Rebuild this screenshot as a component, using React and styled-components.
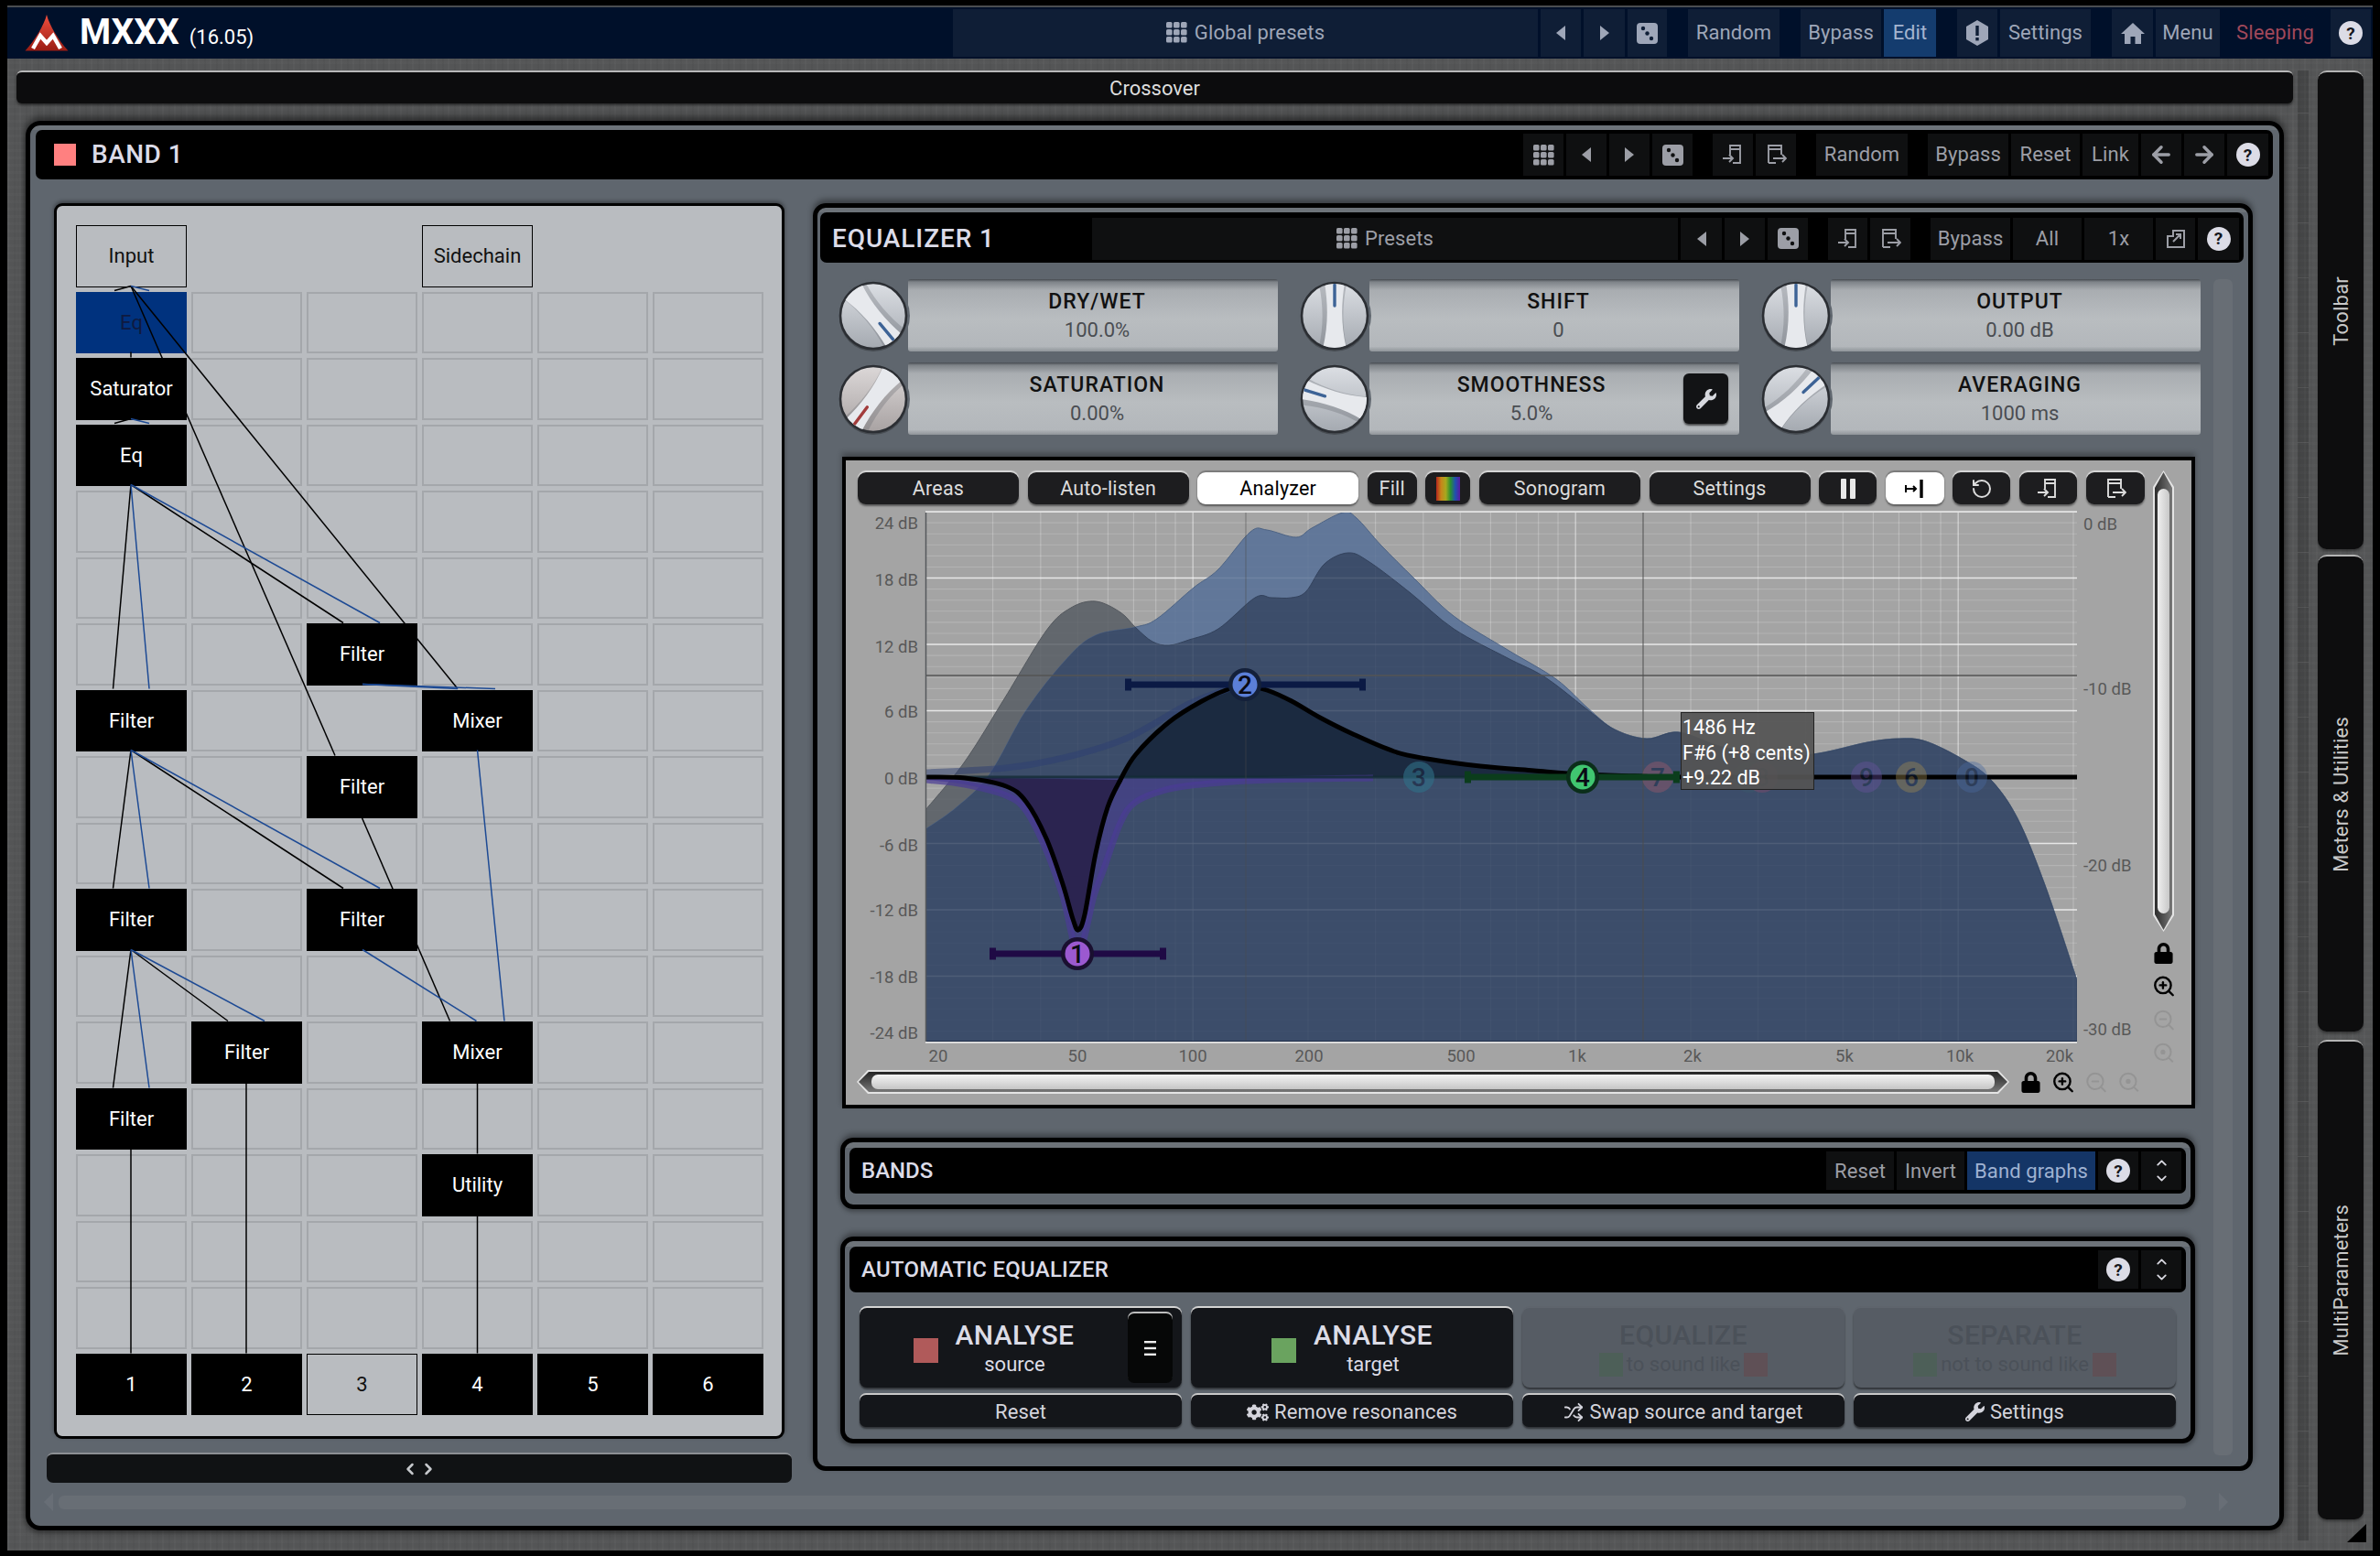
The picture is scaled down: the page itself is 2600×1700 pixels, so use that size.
import React from 'react';
import styled, { createGlobalStyle } from 'styled-components';
import { ArrowLeft, ArrowRight, ChevronUp, ChevronDown, ChevronLeft, ChevronRight, RotateCcw, ZoomIn, ZoomOut, Shuffle } from 'lucide-react';
import { FaWrench, FaCogs, FaLock } from 'react-icons/fa';

const Global = createGlobalStyle`
  html, body { margin: 0; padding: 0; background: #000; }
  #root { width: 2600px; height: 1700px; overflow: hidden; }
  * { box-sizing: border-box; }
`;

const panelBg = '#5f666e';

const Page = styled.div`
  width: 2600px; height: 1700px; background: #000;
  padding: 6px 8px 6px 8px; display: flex; flex-direction: column;
  font-family: Roboto, "Liberation Sans", sans-serif; color: #ddd; font-size: 22px;
`;
const TopBar = styled.header`
  height: 58px; flex: none; background: #00102a; border-top: 2px solid #4a4c50;
  display: flex; align-items: center; justify-content: space-between; padding: 0 2px 0 19px;
`;
const Brand = styled.div`display: flex; align-items: center; gap: 12px; color: #fff;`;
const BrandName = styled.span`font-size: 39px; font-weight: 700; letter-spacing: 0; padding-bottom: 3px;`;
const BrandVersion = styled.span`font-size: 22px; position: relative; top: 4px; margin-left: -1px;`;
const Cluster = styled.div`display: flex; gap: ${p => p.$gap || 23}px; align-items: center;`;
const Group = styled.div`display: flex; gap: 3px;`;
const Cell = styled.div`
  width: ${p => p.$w}px; height: ${p => p.$h || 46}px; display: flex; align-items: center; justify-content: center; gap: 8px;
  background: ${p => p.$active ? p.$activeBg || '#143c6e' : p.$plain ? 'transparent' : p.$navy ? '#0f1e36' : '#0f1011'};
  color: ${p => p.$color || (p.$navy ? '#9ea6b8' : '#9c9ea6')}; font-size: 22px; white-space: nowrap; letter-spacing: .1px;
  padding-bottom: ${p => p.$lift || 0}px;
`;
const Surface = styled.div`
  flex: 1; position: relative; display: flex; padding: 13px 0 0 10px; gap: 0;
  background:
    repeating-linear-gradient(90deg, rgba(255,255,255,.025) 0 2px, transparent 2px 7px, rgba(0,0,0,.03) 7px 9px, transparent 9px 13px),
    repeating-linear-gradient(0deg, rgba(255,255,255,.015) 0 3px, transparent 3px 8px),
    #545556;
`;
const MainCol = styled.main`width: 2487px; flex: none; display: flex; flex-direction: column;`;
const CrossoverBar = styled.div`
  height: 36px; flex: none; background: #0c0c0d; border-top: 2px solid #b8b8b8; border-radius: 6px;
  display: flex; align-items: center; justify-content: center; color: #ddd;
  box-shadow: 0 2px 3px rgba(0,0,0,.5);
`;
const BandPanel = styled.section`
  margin: 19px 0 0 10px; width: 2467px; height: 1540px; flex: none; border: 5px solid #000; border-radius: 16px;
  background: linear-gradient(#6d7379 0 5px, ${panelBg} 5px); padding-top: 5px;
  box-shadow: 0 -5px 8px rgba(0,0,0,.45), 0 3px 6px rgba(0,0,0,.4);
`;
const PanelHeader = styled.div`
  height: ${p => p.$h}px; margin: ${p => p.$m}; background: #000; border-radius: 7px;
  display: flex; align-items: center; justify-content: space-between; padding: ${p => p.$pt || 0}px 5px 0 ${p => p.$pl}px;
`;
const TitleWrap = styled.div`display: flex; align-items: center; gap: 17px;`;
const Swatch = styled.div`width: ${p => p.$s || 24}px; height: ${p => p.$s || 24}px; background: ${p => p.$c}; flex: none;`;
const PanelTitle = styled.span`
  font-size: ${p => p.$s || 28}px; font-weight: 500; color: #dcdce8; letter-spacing: ${p => p.$ls || 0}px;
  padding-bottom: ${p => p.$pb || 0}px;
`;
const BodyRow = styled.div`display: flex; align-items: flex-start; gap: 23px; padding-left: 18px; margin-top: 26px; height: 1398px;`;
const LeftCol = styled.div`width: 814px; flex: none; display: flex; flex-direction: column;`;
const GraphFrame = styled.div`
  margin: 0 8px; height: 1350px; border: 3px solid #000; border-radius: 9px; background: #b9bcc0;
  padding: 21px 0 0 21px; box-shadow: 0 -2px 4px rgba(0,0,0,.4);
`;
const NodeGrid = styled.div`
  position: relative; width: 751px; height: 1300px; display: grid;
  grid-template-columns: repeat(6, 121px); grid-template-rows: repeat(18, 67.5px); gap: 5px;
`;
const kinds = {
  none: 'background: transparent;',
  empty: 'border: 2px solid #a4a7ab;',
  black: 'background:#000; color:#fff;',
  blue: 'background:#00327e; color:#0f1a40;',
  outline: 'border: 1.5px solid #000; color:#111;',
};
const Node = styled.div`
  display: flex; align-items: center; justify-content: center; font-size: 22px;
  ${p => kinds[p.$kind]}
`;
const Wires = styled.svg`position: absolute; inset: 0; pointer-events: none;`;
const Splitter = styled.div`
  margin-top: 15px; height: 33px; flex: none; background: #101214; border-top: 2px solid #8d9094; border-radius: 7px;
  display: flex; align-items: center; justify-content: center; color: #c6c8cc; gap: 0;
`;
const BandScroll = styled.div`
  margin: 11px 56px 0 15px; height: 20px; display: flex; align-items: center; gap: 6px;
`;
const FaintArrow = styled.div`
  width: 0; height: 0; flex: none; border-top: 10px solid transparent; border-bottom: 10px solid transparent;
  ${p => p.$dir === 'l' ? 'border-right: 10px solid #686e76;' : 'border-left: 10px solid #686e76; margin-left: 30px;'}
`;
const FaintTrack = styled.div`flex: 1; height: 15px; background: #686e75; border-radius: 6px;`;

const EqPanel = styled.section`
  width: 1573px; height: 1385px; flex: none; border: 5px solid #000; border-radius: 14px;
  background: linear-gradient(#6d7379 0 5px, ${panelBg} 5px); padding-top: 5px;
  box-shadow: 0 -4px 6px rgba(0,0,0,.4);
`;
const EqBody = styled.div`display: flex; padding: 18px 17px 0 25px;`;
const EqCol = styled.div`width: 1488px; flex: none; display: flex; flex-direction: column;`;
const FaintV = styled.div`width: 21px; height: 1285px; margin-left: 12px; background: #686e75; border-radius: 6px; flex: none;`;
const KnobGrid = styled.div`display: grid; grid-template-columns: repeat(3, 478px); grid-template-rows: repeat(2, 79px); gap: 12px 26px;`;
const KnobUnit = styled.div`display: flex; align-items: center;`;
const KnobSvg = styled.svg`width: 80px; height: 80px; margin: 0 -2px 0 -4px; flex: none; position: relative; z-index: 1;`;
const Field = styled.div`
  flex: 1; height: 79px; display: flex; align-items: center; border-radius: 3px;
  background: linear-gradient(#454a50 0, #7e8388 3px, #a9adb1 12px, #b9bdc0 55%, #b3b7bb 93%, #8f9499 100%);
`;
const FieldText = styled.div`flex: 1; display: flex; flex-direction: column; align-items: center; line-height: 31px; padding-left: ${p => p.$pl || 9}px;`;
const FieldName = styled.span`font-size: 23px; font-weight: 500; color: #111; letter-spacing: 1px;`;
const FieldValue = styled.span`font-size: 22px; color: #4a4d52;`;
const WrenchBtn = styled.div`
  width: 49px; height: 55px; margin-right: 12px; background: #121315; border-radius: 6px; color: #d6d8de; flex: none;
  display: flex; align-items: center; justify-content: center; box-shadow: 0 2px 2px rgba(0,0,0,.6);
`;

const GraphPanel = styled.div`
  margin: 24px 0 0 2px; width: 1478px; height: 712px; flex: none; border: 4px solid #000; background: #a4a4a4;
  display: grid; grid-template-columns: 1420px 23px; column-gap: 8px; box-shadow: 0 -4px 6px rgba(0,0,0,.3);
`;
const GraphMain = styled.div`display: flex; flex-direction: column; padding-top: 13px;`;
const GraphTools = styled.div`display: flex; gap: 9.6px; padding-left: 13px; height: 35px; flex: none;`;
const GBtn = styled.div`
  width: ${p => p.$w}px; height: 35px; border-radius: 9px; display: flex; align-items: center; justify-content: center;
  background: ${p => p.$on ? '#fff' : '#1d1d1f'}; color: ${p => p.$on ? '#000' : '#dcdcdc'}; font-size: 21.5px; letter-spacing: .2px;
  box-shadow: 0 -2px 1px ${p => p.$on ? '#7a7a7a' : '#d8d8d8'}, 0 2px 2px #5c5c5c;
`;
const Rainbow = styled.div`width: 26px; height: 26px; background: linear-gradient(90deg, #b4261e, #c8841a, #a8a81e, #2a9030, #2050b0, #5a1aa0);`;
const ChartWrap = styled.div`position: relative; margin-top: 4px; height: 610px; flex: none;`;
const Chart = styled.svg`
  display: block; width: 1420px; height: 610px;
  text { font-family: Roboto, "Liberation Sans", sans-serif; }
`;
const ChartTip = styled.div`
  position: absolute; left: 912px; top: 223px; width: 146px; height: 85px; background: rgba(84,84,84,.93);
  border: 1px solid #222; color: #fff; font-size: 21.5px; line-height: 27.5px; padding: 2px 0 0 1px; white-space: nowrap;
`;
const HRow = styled.div`display: flex; align-items: center; margin: 4px 0 0 12px; height: 26px; gap: 10px;`;
const ScrollOuter = styled.div`
  background: #e4e4e4; padding: 2px; display: flex; flex: none;
  ${p => p.$h
    ? 'width: 1259px; height: 26px; clip-path: polygon(0 50%, 12px 0, calc(100% - 12px) 0, 100% 50%, calc(100% - 12px) 100%, 12px 100%);'
    : 'width: 23px; height: 504px; margin-top: 11px; clip-path: polygon(50% 0, 100% 18px, 100% calc(100% - 18px), 50% 100%, 0 calc(100% - 18px), 0 18px);'}
`;
const ScrollInner = styled.div`
  flex: 1; display: flex;
  ${p => p.$h
    ? 'padding: 3px 14px; background: linear-gradient(#242424, #787878); clip-path: polygon(0 50%, 11px 0, calc(100% - 11px) 0, 100% 50%, calc(100% - 11px) 100%, 11px 100%);'
    : 'padding: 18px 3px; background: linear-gradient(90deg, #2c2c2c, #787878); clip-path: polygon(50% 0, 100% 17px, 100% calc(100% - 17px), 50% 100%, 0 calc(100% - 17px), 0 17px);'}
`;
const Thumb = styled.div`
  flex: 1; border-radius: 7px;
  background: ${p => p.$h ? 'linear-gradient(#f4f4f4, #c6c6c6)' : 'linear-gradient(90deg, #efefef, #c8c8c8)'};
`;
const ToolIcon = styled.div`width: 26px; height: 26px; flex: none; display: flex; align-items: center; justify-content: center; color: ${p => p.$faint ? '#949494' : '#000'};`;
const GraphSide = styled.div`display: flex; flex-direction: column; align-items: center;`;
const SideIcons = styled.div`display: flex; flex-direction: column; gap: 10.5px; margin-top: 10px;`;

const Section = styled.section`
  margin-top: ${p => p.$mt}px; width: 1480px; height: ${p => p.$h}px; flex: none; border: 5px solid #000; border-radius: 14px;
  background: linear-gradient(#6d7379 0 6px, ${panelBg} 6px); padding: 6px 5px 0 5px;
  box-shadow: 0 -4px 6px rgba(0,0,0,.35), 0 3px 5px rgba(0,0,0,.3);
`;
const AutoGrid = styled.div`
  display: grid; grid-template-columns: repeat(4, 352px); grid-template-rows: 87px 35px; gap: 8px 10px; padding: 17px 0 0 11px;
`;
const BigBtn = styled.div`
  position: relative; display: flex; align-items: center; border-radius: 8px; background: ${p => p.$off ? '#565c64' : '#14161a'};
  box-shadow: 0 -2px 0 ${p => p.$off ? '#5e646c' : '#d4d4d4'}, 0 2px 2px rgba(0,0,0,.5);
`;
const BigMain = styled.div`flex: 1; display: flex; align-items: center; justify-content: center; gap: 19px; padding-top: 5px;`;
const BigLabels = styled.div`display: flex; flex-direction: column; align-items: center; line-height: 32px; color: ${p => p.$off ? '#4b5159' : '#dcdce6'};`;
const BigName = styled.span`font-size: 30px; font-weight: 500; letter-spacing: .4px;`;
const BigSub = styled.span`font-size: 22px; display: flex; align-items: center; gap: 4px;`;
const MenuBtn = styled.div`
  width: 49px; height: 76px; margin-right: 10px; background: #060707; border-radius: 7px; flex: none; color: #e6e6e6;
  box-shadow: 0 -2px 0 #bdbdbd; display: flex; align-items: center; justify-content: center;
`;
const SmallBtn = styled.div`
  display: flex; align-items: center; justify-content: center; gap: 6px; border-radius: 7px; background: #14161a; color: #d4d4dc;
  box-shadow: 0 -2px 0 #c8c8c8, 0 2px 2px rgba(0,0,0,.5); padding-top: 2px; letter-spacing: .1px;
`;
const SideBar = styled.aside`
  margin-left: 5px; width: 12px; height: 1607px; flex: none; background: rgba(0,0,0,.18);
  background-image: repeating-linear-gradient(0deg, rgba(255,255,255,.08) 0 1px, transparent 1px 60px);
`;
const SideCol = styled.div`margin-left: 10px; width: 50px; flex: none; display: flex; flex-direction: column;`;
const SidePanel = styled.div`
  height: ${p => p.$h}px; margin-bottom: ${p => p.$mb}px; background: #0d0d0e; border-top: 2px solid #b4b4b4; border-radius: 10px; flex: none;
  display: flex; align-items: center; justify-content: center; box-shadow: 0 2px 3px rgba(0,0,0,.4);
`;
const SideLabel = styled.span`writing-mode: vertical-rl; transform: rotate(180deg); color: #c8c8c8; font-size: 22px; letter-spacing: .2px;`;
const ResizeCorner = styled.div`
  position: absolute; right: 7px; bottom: 9px; width: 21px; height: 20px; background: #000;
  clip-path: polygon(100% 0, 100% 100%, 0 100%);
`;
const HelpDot = styled.span`
  width: 26px; height: 26px; border-radius: 50%; background: #dcdce6; color: #14161c; font-size: 19px; font-weight: 700;
  display: flex; align-items: center; justify-content: center;
`;
const Stack = styled.div`display: flex; flex-direction: column; align-items: center; line-height: 0;`;

const GridIcon = ({ c = 'currentColor' }) => (
  <svg width="23" height="23" viewBox="0 0 23 23">
    {[0, 8, 16].flatMap(y => [0, 8, 16].map(x => <rect key={`${x}${y}`} x={x} y={y} width="6.6" height="6.6" rx="1.6" fill={c} />))}
  </svg>
);
const Tri = ({ dir }) => (
  <svg width="12" height="18" viewBox="0 0 12 18"><path d={dir === 'l' ? 'M11 1 V17 L1 9Z' : 'M1 1 V17 L11 9Z'} fill="currentColor" /></svg>
);
const Dice = ({ hole }) => (
  <svg width="23" height="23" viewBox="0 0 23 23">
    <rect width="23" height="23" rx="4" fill="currentColor" />
    <circle cx="7" cy="6" r="2.2" fill={hole} /><circle cx="11.5" cy="11.5" r="2.2" fill={hole} /><circle cx="16" cy="17" r="2.2" fill={hole} />
  </svg>
);
const SaveIn = ({ s = 24 }) => (
  <svg width={s} height={s} viewBox="0 0 24 24" fill="none" stroke="currentColor" strokeWidth="1.9">
    <path d="M9 12V2H20V21H12M9 6H20M1 16H12M8 12l4 4-4 4" />
  </svg>
);
const SaveOut = ({ s = 24 }) => (
  <svg width={s} height={s} viewBox="0 0 24 24" fill="none" stroke="currentColor" strokeWidth="1.9">
    <path d="M4 21V2H18V12M4 6H18M4 21H12M9 16H23M19 12l4 4-4 4" />
  </svg>
);
const Warn = () => (
  <svg width="24" height="28" viewBox="0 0 24 28">
    <path d="M12 0L24 7V21L12 28L0 21V7Z" fill="currentColor" />
    <rect x="10.3" y="6" width="3.4" height="11" fill="#0f1e36" /><rect x="10.3" y="19" width="3.4" height="3.4" fill="#0f1e36" />
  </svg>
);
const Home = () => (
  <svg width="26" height="26" viewBox="0 0 26 26">
    <path d="M13 2L26 14H22V25H15.5V17H10.5V25H4V14H0Z" fill="currentColor" />
  </svg>
);
const FitZoom = () => (
  <svg width="27" height="27" viewBox="0 0 24 24" fill="none" stroke="currentColor" strokeWidth="1.8">
    <circle cx="11" cy="11" r="8" /><circle cx="11" cy="11" r="2.4" fill="currentColor" stroke="none" /><path d="M21 21l-4.3-4.3" />
  </svg>
);
const Logo = () => (
  <svg width="48" height="40" viewBox="0 0 48 40" style={{ flex: 'none' }}>
    <defs><linearGradient id="lg" x1="0" y1="0" x2="0" y2="1"><stop offset="0" stopColor="#f0503f" /><stop offset="1" stopColor="#9a1c13" /></linearGradient></defs>
    <path d="M24 0C27 12 37 28 47.5 39.5H.5C11 28 21 12 24 0Z" fill="url(#lg)" />
    <path d="M9 37L17 23L24 31L31 23L39 37" fill="none" stroke="#fff" strokeWidth="4.4" />
  </svg>
);
const Help = () => <HelpDot>?</HelpDot>;
const UpDown = () => <Stack><ChevronUp size={17} strokeWidth={2.6} /><ChevronDown size={17} strokeWidth={2.6} /></Stack>;

const Knob = ({ angle, color = '#3d6396', warm }) => (
  <KnobSvg viewBox="-40 -40 80 80">
    <defs>
      <linearGradient id={warm ? 'kw' : 'kb'} x1="0" y1="0" x2="0" y2="1">
        <stop offset="0" stopColor={warm ? '#dcd8d8' : '#dcdfe4'} /><stop offset="1" stopColor={warm ? '#a8a2a2' : '#a4a9b0'} />
      </linearGradient>
      <clipPath id="kc"><circle r="35" /></clipPath>
    </defs>
    <circle r="40" fill={panelBg} />
    <circle r="37" cy="2" fill="rgba(0,0,0,.25)" />
    <circle r="36" fill={`url(#${warm ? 'kw' : 'kb'})`} stroke="#2b2e33" strokeWidth="2.6" />
    <g clipPath="url(#kc)" transform={`rotate(${angle})`}>
      <path d="M-15-36C-10-12-10 12-16 36H16C10 12 10-12 15-36Z" fill="rgba(90,95,102,.28)" transform="translate(-2 2)" />
      <path d="M-11-36C-7-12-7 12-13 36H13C7 12 7-12 11-36Z" fill="#e7e9ed" />
      <line x1="0" y1="-34" x2="0" y2="-11" stroke={color} strokeWidth="3.4" strokeLinecap="round" />
    </g>
  </KnobSvg>
);

const NODES = {
  '0-0': ['outline', 'Input'], '0-3': ['outline', 'Sidechain'],
  '1-0': ['blue', 'Eq'], '2-0': ['black', 'Saturator'], '3-0': ['black', 'Eq'],
  '6-2': ['black', 'Filter'], '7-0': ['black', 'Filter'], '7-3': ['black', 'Mixer'],
  '8-2': ['black', 'Filter'], '10-0': ['black', 'Filter'], '10-2': ['black', 'Filter'],
  '12-1': ['black', 'Filter'], '12-3': ['black', 'Mixer'], '13-0': ['black', 'Filter'], '14-3': ['black', 'Utility'],
  '17-0': ['black', '1'], '17-1': ['black', '2'], '17-2': ['outline', '3'], '17-3': ['black', '4'], '17-4': ['black', '5'], '17-5': ['black', '6'],
};
const B = '#000', L = '#1d4a94';
const WIRES = [
  [143, 313, 366, 826, B], [143, 313, 500, 753, B], [143, 313, 125, 318, B], [143, 313, 163, 318, L],
  [143, 385, 143, 391, B], [143, 458, 125, 463, B], [143, 458, 163, 463, L],
  [143, 530, 123.5, 753, B], [143, 530, 163, 753, L], [143, 530, 375, 681, B], [143, 530, 415, 681, L],
  [396, 748, 541, 753, L], [396, 748, 500, 753, L], [521.5, 820, 551, 1116, L],
  [395, 893, 491.5, 1116, B],
  [143, 820, 123.5, 971, B], [143, 820, 163, 971, L], [143, 820, 375, 971, B], [143, 820, 415, 971, L],
  [143, 1038, 123.5, 1189, B], [143, 1038, 163, 1189, L], [143, 1038, 249, 1116, B], [143, 1038, 289, 1116, L],
  [396, 1038, 520.5, 1116, L], [269, 1183, 269, 1479, B], [143, 1256, 143, 1479, B],
  [521.5, 1183, 521.5, 1261, B], [521.5, 1328, 521.5, 1479, B],
];

const smooth = pts => {
  let d = `M${pts[0][0]} ${pts[0][1]}`;
  for (let i = 0; i < pts.length - 1; i++) {
    const p0 = pts[i - 1] || pts[i], p1 = pts[i], p2 = pts[i + 1], p3 = pts[i + 2] || p2;
    d += `C${p1[0] + (p2[0] - p0[0]) / 6} ${p1[1] + (p2[1] - p0[1]) / 6} ${p2[0] - (p3[0] - p1[0]) / 6} ${p2[1] - (p3[1] - p1[1]) / 6} ${p2[0]} ${p2[1]}`;
  }
  return d;
};
const TAIL = [[1764,798],[1799,808],[1834,801],[1881,817],[1940,828],[1987,824],[2040,812],[2075,808],[2104,811],[2145,831],[2175,853],[2204,895],[2234,968],[2269,1072]];
const OUTER = [[1011,907],[1045,883],[1081,847],[1121,777],[1166,720],[1197,695],[1241,686],[1264,677],[1304,643],[1331,623],[1366,582],[1384,580],[1416,588],[1433,578],[1467,561],[1482,567],[1509,597],[1545,633],[1588,674],[1647,711],[1700,743],[1735,775],...TAIL];
const GREY = [[1011,886],[1054,833],[1098,763],[1143,690],[1170,665],[1197,658],[1224,670],[1241,687],[1259,702],[1277,706],[1299,700],[1331,688],[1371,654],[1389,654],[1411,654],[1427,647],[1447,617],[1473,605],[1496,615],[1541,649],[1588,688],[1647,720],[1688,741],[1735,777],...TAIL];
const closeArea = d => `${d}L2269 1139L1011 1139Z`;
const EQ_L = [[1011,850],[1054,851],[1099,860],[1121,877],[1143,917],[1161,967],[1172,1005],[1178,1017]];
const EQ_R = [[1178,1017],[1185,1000],[1197,933],[1210,883],[1224,853],[1241,825],[1277,790],[1313,767],[1344,753],[1360,750],[1384,755],[1411,767],[1442,785],[1478,803],[1523,822],[1559,830],[1617,838],[1676,843],[1729,847],[1793,849],[1852,850],[2269,850]];
const BAND1 = [[1011,853],[1054,858],[1099,870],[1121,887],[1143,930],[1161,980],[1178,1040],[1195,980],[1206,950],[1224,900],[1241,877],[1277,863],[1321,857],[1389,853],[1500,851]];
const BAND2 = [[1011,845],[1099,840],[1166,828],[1232,807],[1299,770],[1344,753],[1360,749]];
const GHOSTS = [['3',1550,'#2f7088',.6],['7',1811,'#a45a6a',.4],['5',1911,'#3a5a6a',.4],['8',1925,'#8a4a6a',.4],['9',2039,'#6a52a0',.4],['6',2088,'#a08a50',.4],['0',2154,'#4a6aa0',.4]];
const FREQS = [30,40,50,60,70,80,90,100,200,300,400,500,600,700,800,900,1000,2000,3000,4000,5000,6000,7000,8000,9000,10000,20000];
const fx = f => 1011 + 418 * Math.log10(f / 20);
const DBS = Array.from({ length: 49 }, (_, i) => 24 - i);
const Grid = () => (
  <>
    {FREQS.map(f => <line key={f} x1={fx(f)} x2={fx(f)} y1="561" y2="1139" stroke="#fff" strokeOpacity={[100,1000,10000].includes(f) ? .5 : .22} strokeWidth="1.2" />)}
    {DBS.map(d => <line key={d} x1="1011" x2="2269" y1={850 - 12.08 * d} y2={850 - 12.08 * d} stroke="#fff" strokeOpacity={d % 6 === 0 ? .7 : .16} strokeWidth={d % 6 === 0 ? 1.6 : 1.1} />)}
  </>
);
const Handle = ({ x, y, n, outer, inner }) => (
  <g>
    <circle cx={x} cy={y} r="18" fill={outer} />
    <circle cx={x} cy={y} r="13.5" fill={inner} />
    <text x={x} y={y + 10} textAnchor="middle" fontSize="28" fontWeight="500" fill="#0a0a14">{n}</text>
  </g>
);
const Bar = ({ x1, x2, y, c }) => (
  <g fill={c}>
    <rect x={x1} y={y - 3.5} width={x2 - x1} height="7" />
    <rect x={x1} y={y - 6.5} width="7" height="13" /><rect x={x2 - 7} y={y - 6.5} width="7" height="13" />
  </g>
);

const LEFT = [['24 dB',572],['18 dB',634],['12 dB',707],['6 dB',778],['0 dB',851],['-6 dB',924],['-12 dB',995],['-18 dB',1068],['-24 dB',1129]];
const RIGHT = [['0 dB',573],['-10 dB',753],['-20 dB',946],['-30 dB',1125]];
const BOTTOM = [['20',1025],['50',1177],['100',1303],['200',1430],['500',1596],['1k',1723],['2k',1849],['5k',2015],['10k',2141],['20k',2250]];

const EqChart = () => {
  const outer = smooth(OUTER), grey = smooth(GREY);
  const eq = smooth([...EQ_L, ...EQ_R.slice(1)]);
  return (
    <Chart viewBox="924 556 1420 610">
      <defs>
        <clipPath id="plot"><rect x="1011" y="561" width="1258" height="578" /></clipPath>
        <clipPath id="outer"><path d={closeArea(outer)} /></clipPath>
      </defs>
      <Grid />
      <g clipPath="url(#plot)">
        <path d={closeArea(grey)} fill="#62676d" stroke="#54585e" />
        <path d={closeArea(outer)} fill="#617799" stroke="#4d6384" />
        <path d={closeArea(grey)} fill="#3c4d6a" stroke="#33425c" clipPath="url(#outer)" />
        <g opacity=".13"><Grid /></g>
        <path d={`${smooth(BAND1)}L1011 850Z`} fill="#46408a" fillOpacity=".75" />
        <path d={`${smooth(EQ_L)}${smooth(EQ_R.slice(0, 5)).replace('M1178 1017', '')}L1011 850Z`} fill="#2b2450" />
        <path d={`${smooth(EQ_R.slice(4, 21))}L1224 850Z`} fill="#1b2a40" />
        <path d={smooth(BAND1)} fill="none" stroke="#4a3a96" strokeOpacity=".7" strokeWidth="7" />
        <path d={smooth(BAND2)} fill="none" stroke="#2b3e72" strokeOpacity=".5" strokeWidth="7" />
        <line x1="1011" x2="2269" y1="850" y2="850" stroke="#132c36" strokeOpacity=".85" strokeWidth="3" />
        <line x1="1011" x2="2269" y1="739" y2="739" stroke="#555" strokeWidth="1.4" />
        <line x1="1795" x2="1795" y1="561" y2="1139" stroke="#4c4c4c" strokeOpacity=".8" strokeWidth="1.2" />
        <line x1="1361" x2="1361" y1="561" y2="1139" stroke="#4c4c4c" strokeOpacity=".45" strokeWidth="1.2" />
        <line x1="1011" x2="2269" y1="1139" y2="1139" stroke="#1f2d48" strokeWidth="2" />
        <path d={eq} fill="none" stroke="#000" strokeWidth="5" />
      </g>
      <line x1="1011.5" x2="1011.5" y1="561" y2="1139" stroke="#55585c" strokeWidth="1.5" />
      {LEFT.map(([t, y]) => <text key={t} x="1003" y={y + 7} textAnchor="end" fontSize="18.5" fill="#585858">{t}</text>)}
      {RIGHT.map(([t, y]) => <text key={t} x="2276" y={y + 7} fontSize="18.5" fill="#585858">{t}</text>)}
      {BOTTOM.map(([t, x]) => <text key={t} x={x} y="1161" textAnchor="middle" fontSize="18.5" fill="#585858">{t}</text>)}
      {GHOSTS.map(([n, x, c, o]) => (
        <g key={n} opacity={o}>
          <circle cx={x} cy="850" r="17" fill={c} />
          <text x={x} y="860" textAnchor="middle" fontSize="28" fontWeight="500" fill="#1b2a44">{n}</text>
        </g>
      ))}
      <Bar x1={1229} x2={1492} y={749} c="#0b1a44" />
      <Bar x1={1081} x2={1274} y={1043} c="#1f0a45" />
      <Bar x1={1600} x2={1835} y={850} c="#0b3d1c" />
      <Handle x={1360} y={749} n="2" outer="#14203a" inner="#5b7fd8" />
      <Handle x={1177} y={1043} n="1" outer="#1a1030" inner="#9b59d0" />
      <Handle x={1729} y={850} n="4" outer="#0b2e1a" inner="#40c670" />
    </Chart>
  );
};

export default function App() {
  const cells = [];
  for (let r = 0; r < 18; r++) for (let c = 0; c < 6; c++) {
    const n = NODES[`${r}-${c}`];
    const kind = n ? n[0] : (r === 0 ? 'none' : 'empty');
    cells.push(<Node key={`${r}-${c}`} $kind={kind}>{n ? n[1] : null}</Node>);
  }
  return (
    <Page>
      <Global />
      <TopBar>
        <Brand>
          <Logo />
          <BrandName>MXXX</BrandName>
          <BrandVersion>(16.05)</BrandVersion>
        </Brand>
        <Cluster>
          <Group>
            <Cell $navy $h={52} $lift={2} $w={639}><GridIcon />Global presets</Cell>
            <Cell $navy $h={52} $w={44}><Tri dir="l" /></Cell>
            <Cell $navy $h={52} $w={45}><Tri dir="r" /></Cell>
            <Cell $navy $h={52} $w={43}><Dice hole="#0f1e36" /></Cell>
          </Group>
          <Group><Cell $navy $h={52} $lift={2} $w={100}>Random</Cell></Group>
          <Group>
            <Cell $navy $h={52} $lift={2} $w={88}>Bypass</Cell>
            <Cell $navy $h={52} $lift={2} $w={57} $active $color="#a4b4d0">Edit</Cell>
          </Group>
          <Group>
            <Cell $navy $h={52} $w={44}><Warn /></Cell>
            <Cell $navy $h={52} $lift={2} $w={99}>Settings</Cell>
          </Group>
          <Group>
            <Cell $navy $h={52} $w={45}><Home /></Cell>
            <Cell $navy $h={52} $lift={2} $w={70}>Menu</Cell>
            <Cell $plain $h={52} $lift={2} $w={115} $color="#a0485a">Sleeping</Cell>
            <Cell $navy $h={52} $w={44}><Help /></Cell>
          </Group>
        </Cluster>
      </TopBar>
      <Surface>
        <MainCol>
          <CrossoverBar>Crossover</CrossoverBar>
          <BandPanel>
            <PanelHeader $h={54} $m="0 7px 0 6px" $pl={20}>
              <TitleWrap><Swatch $c="#ff8080" /><PanelTitle $ls={.5} $pb={2}>BAND 1</PanelTitle></TitleWrap>
              <Cluster $gap={22}>
                <Group>
                  <Cell $w={44}><GridIcon /></Cell><Cell $w={44}><Tri dir="l" /></Cell><Cell $w={44}><Tri dir="r" /></Cell><Cell $w={44}><Dice hole="#0f1011" /></Cell>
                </Group>
                <Group><Cell $w={44}><SaveIn /></Cell><Cell $w={44}><SaveOut /></Cell></Group>
                <Group><Cell $lift={2} $w={100}>Random</Cell></Group>
                <Group>
                  <Cell $lift={2} $w={88}>Bypass</Cell><Cell $lift={2} $w={75}>Reset</Cell><Cell $lift={2} $w={61}>Link</Cell>
                  <Cell $w={44}><ArrowLeft size={28} strokeWidth={3} /></Cell><Cell $w={44}><ArrowRight size={28} strokeWidth={3} /></Cell>
                  <Cell $w={45}><Help /></Cell>
                </Group>
              </Cluster>
            </PanelHeader>
            <BodyRow>
              <LeftCol>
                <GraphFrame>
                  <NodeGrid>
                    {cells}
                    <Wires viewBox="83 246.5 751 1300">
                      {WIRES.map(([a, b, c, d, s], i) => <line key={i} x1={a} y1={b} x2={c} y2={d} stroke={s} strokeWidth="1.5" />)}
                    </Wires>
                  </NodeGrid>
                </GraphFrame>
                <Splitter><ChevronLeft size={20} strokeWidth={3} /><ChevronRight size={20} strokeWidth={3} /></Splitter>
              </LeftCol>
              <EqPanel>
                <PanelHeader $h={55} $m="0 5px 0 3px" $pl={13} $pt={2}>
                  <PanelTitle $ls={.9}>EQUALIZER 1</PanelTitle>
                  <Cluster $gap={22}>
                    <Group>
                      <Cell $w={640}><GridIcon />Presets</Cell><Cell $w={45}><Tri dir="l" /></Cell><Cell $w={44}><Tri dir="r" /></Cell><Cell $w={44}><Dice hole="#0f1011" /></Cell>
                    </Group>
                    <Group><Cell $w={43}><SaveIn /></Cell><Cell $w={44}><SaveOut /></Cell></Group>
                    <Group>
                      <Cell $w={87}>Bypass</Cell><Cell $w={75}>All</Cell><Cell $w={75}>1x</Cell>
                      <Cell $w={43}><svg width="24" height="24" viewBox="0 0 24 24" fill="none" stroke="currentColor" strokeWidth="2"><path d="M9 3H21V21H3V9H9ZM3 21L3 14M9 15L17 7M12 7H17V12" /></svg></Cell>
                      <Cell $w={45}><Help /></Cell>
                    </Group>
                  </Cluster>
                </PanelHeader>
                <EqBody>
                  <EqCol>
                    <KnobGrid>
                      <KnobUnit><Knob angle={140} /><Field><FieldText><FieldName>DRY/WET</FieldName><FieldValue>100.0%</FieldValue></FieldText></Field></KnobUnit>
                      <KnobUnit><Knob angle={0} /><Field><FieldText><FieldName>SHIFT</FieldName><FieldValue>0</FieldValue></FieldText></Field></KnobUnit>
                      <KnobUnit><Knob angle={0} /><Field><FieldText><FieldName>OUTPUT</FieldName><FieldValue>0.00 dB</FieldValue></FieldText></Field></KnobUnit>
                      <KnobUnit><Knob angle={217} color="#a23c3c" warm /><Field><FieldText><FieldName>SATURATION</FieldName><FieldValue>0.00%</FieldValue></FieldText></Field></KnobUnit>
                      <KnobUnit><Knob angle={-73} /><Field><FieldText $pl={11}><FieldName>SMOOTHNESS</FieldName><FieldValue>5.0%</FieldValue></FieldText><WrenchBtn><FaWrench size={22} /></WrenchBtn></Field></KnobUnit>
                      <KnobUnit><Knob angle={47} /><Field><FieldText><FieldName>AVERAGING</FieldName><FieldValue>1000 ms</FieldValue></FieldText></Field></KnobUnit>
                    </KnobGrid>
                    <GraphPanel>
                      <GraphMain>
                        <GraphTools>
                          <GBtn $w={176}>Areas</GBtn>
                          <GBtn $w={176}>Auto-listen</GBtn>
                          <GBtn $w={176} $on>Analyzer</GBtn>
                          <GBtn $w={54}>Fill</GBtn>
                          <GBtn $w={49}><Rainbow /></GBtn>
                          <GBtn $w={176}>Sonogram</GBtn>
                          <GBtn $w={176}>Settings</GBtn>
                          <GBtn $w={63}><svg width="18" height="24" viewBox="0 0 18 24" fill="#e8e8e8"><rect x="1" y="1" width="6" height="22" rx="1" /><rect x="11" y="1" width="6" height="22" rx="1" /></svg></GBtn>
                          <GBtn $w={64} $on><svg width="24" height="24" viewBox="0 0 24 24" fill="none" stroke="#000" strokeWidth="2"><path d="M2 8V16M2 12H13M10 9l3 3-3 3" /><path d="M19 2V22" strokeWidth="3.4" /></svg></GBtn>
                          <GBtn $w={63}><RotateCcw size={24} /></GBtn>
                          <GBtn $w={63}><SaveIn /></GBtn>
                          <GBtn $w={64}><SaveOut /></GBtn>
                        </GraphTools>
                        <ChartWrap>
                          <EqChart />
                          <ChartTip>1486 Hz<br />F#6 (+8 cents)<br />+9.22 dB</ChartTip>
                        </ChartWrap>
                        <HRow>
                          <ScrollOuter $h><ScrollInner $h><Thumb $h /></ScrollInner></ScrollOuter>
                          <ToolIcon><FaLock size={23} /></ToolIcon>
                          <ToolIcon><ZoomIn size={27} strokeWidth={2.2} /></ToolIcon>
                          <ToolIcon $faint><ZoomOut size={27} strokeWidth={1.8} /></ToolIcon>
                          <ToolIcon $faint><FitZoom /></ToolIcon>
                        </HRow>
                      </GraphMain>
                      <GraphSide>
                        <ScrollOuter><ScrollInner><Thumb /></ScrollInner></ScrollOuter>
                        <SideIcons>
                          <ToolIcon><FaLock size={23} /></ToolIcon>
                          <ToolIcon><ZoomIn size={27} strokeWidth={2.2} /></ToolIcon>
                          <ToolIcon $faint><ZoomOut size={27} strokeWidth={1.8} /></ToolIcon>
                          <ToolIcon $faint><FitZoom /></ToolIcon>
                        </SideIcons>
                      </GraphSide>
                    </GraphPanel>
                    <Section $mt={32} $h={78}>
                      <PanelHeader $h={50} $m="0" $pl={13}>
                        <PanelTitle $s={24}>BANDS</PanelTitle>
                        <Group>
                          <Cell $h={42} $w={74}>Reset</Cell>
                          <Cell $h={42} $w={74}>Invert</Cell>
                          <Cell $h={42} $w={140} $active $activeBg="#143566" $color="#9fb2d2">Band graphs</Cell>
                          <Cell $h={42} $w={44}><Help /></Cell>
                          <Cell $h={42} $w={44} $color="#d8d8e0"><UpDown /></Cell>
                        </Group>
                      </PanelHeader>
                    </Section>
                    <Section $mt={30} $h={226}>
                      <PanelHeader $h={50} $m="0" $pl={13}>
                        <PanelTitle $s={24} $ls={.25}>AUTOMATIC EQUALIZER</PanelTitle>
                        <Group>
                          <Cell $h={42} $w={44}><Help /></Cell>
                          <Cell $h={42} $w={44} $color="#d8d8e0"><UpDown /></Cell>
                        </Group>
                      </PanelHeader>
                      <AutoGrid>
                        <BigBtn>
                          <BigMain><Swatch $s={27} $c="#b05a5a" /><BigLabels><BigName>ANALYSE</BigName><BigSub>source</BigSub></BigLabels></BigMain>
                          <MenuBtn><svg width="13" height="16" viewBox="0 0 13 16" fill="#eee"><rect width="13" height="2.4" /><rect y="6.8" width="13" height="2.4" /><rect y="13.6" width="13" height="2.4" /></svg></MenuBtn>
                        </BigBtn>
                        <BigBtn>
                          <BigMain><Swatch $s={27} $c="#6aa35f" /><BigLabels><BigName>ANALYSE</BigName><BigSub>target</BigSub></BigLabels></BigMain>
                        </BigBtn>
                        <BigBtn $off>
                          <BigMain><BigLabels $off><BigName>EQUALIZE</BigName><BigSub><Swatch $s={26} $c="#4d5f58" />to sound like<Swatch $s={26} $c="#5f5056" /></BigSub></BigLabels></BigMain>
                        </BigBtn>
                        <BigBtn $off>
                          <BigMain><BigLabels $off><BigName>SEPARATE</BigName><BigSub><Swatch $s={26} $c="#4d5f58" />not to sound like<Swatch $s={26} $c="#5f5056" /></BigSub></BigLabels></BigMain>
                        </BigBtn>
                        <SmallBtn>Reset</SmallBtn>
                        <SmallBtn><FaCogs size={24} />Remove resonances</SmallBtn>
                        <SmallBtn><Shuffle size={22} />Swap source and target</SmallBtn>
                        <SmallBtn><FaWrench size={21} />Settings</SmallBtn>
                      </AutoGrid>
                    </Section>
                  </EqCol>
                  <FaintV />
                </EqBody>
              </EqPanel>
            </BodyRow>
            <BandScroll>
              <FaintArrow $dir="l" /><FaintTrack /><FaintArrow $dir="r" />
            </BandScroll>
          </BandPanel>
        </MainCol>
        <SideBar />
        <SideCol>
          <SidePanel $h={523} $mb={6}><SideLabel>Toolbar</SideLabel></SidePanel>
          <SidePanel $h={521} $mb={9}><SideLabel>Meters &amp; Utilities</SideLabel></SidePanel>
          <SidePanel $h={524} $mb={0}><SideLabel>MultiParameters</SideLabel></SidePanel>
        </SideCol>
        <ResizeCorner />
      </Surface>
    </Page>
  );
}
